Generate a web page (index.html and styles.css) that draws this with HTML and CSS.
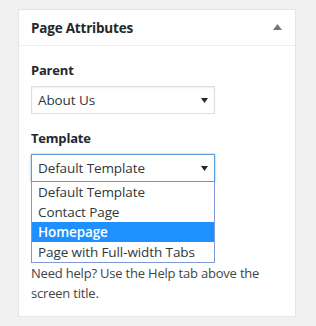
FILE: index.html
```html
<!DOCTYPE html>
<html>
<head>
<meta charset="utf-8">
<link rel="stylesheet" href="styles.css">
</head>
<body>
<div class="postbox">
  <div class="hndle">
    <h2 class="title">Page Attributes</h2>
    <svg class="toggle" width="9" height="6" viewBox="0 0 9 6"><polygon points="4.5,0 9,6 0,6" fill="#72777c"/></svg>
  </div>
  <div class="inside">
    <p class="label">Parent</p>
    <div class="select">
      <span>About Us</span>
      <svg class="caret" width="7" height="5" viewBox="0 0 7 5"><polygon points="0,0 7,0 3.5,5" fill="#23282d"/></svg>
    </div>
    <p class="label">Template</p>
    <div class="combo">
      <div class="select focused">
        <span>Default Template</span>
        <svg class="caret" width="7" height="5" viewBox="0 0 7 5"><polygon points="0,0 7,0 3.5,5" fill="#23282d"/></svg>
      </div>
      <ul class="dropdown">
        <li>Default Template</li>
        <li>Contact Page</li>
        <li class="active">Homepage</li>
        <li>Page with Full-width Tabs</li>
      </ul>
    </div>
    <div class="covered" aria-hidden="true">
      <p class="label">Order</p>
      <div class="select"><span>0</span></div>
    </div>
    <p class="help">Need help? Use the Help tab above the screen title.</p>
  </div>
</div>
</body>
</html>
```
FILE: styles.css
```css
html, body {
  margin: 0;
  padding: 0;
}
body {
  background: #f1f1f1;
  font-family: "Open Sans", "Noto Sans", sans-serif;
  color: #444;
  padding: 9px 20px 0 18px;
}
.postbox {
  background: #fff;
  border: 1px solid #e5e5e5;
  box-shadow: 0 1px 1px rgba(0,0,0,0.04);
  width: 276px;
}
.hndle {
  height: 35px;
  border-bottom: 1px solid #eee;
  display: flex;
  align-items: center;
  justify-content: space-between;
  padding: 0 13px 0 12px;
}
.title {
  margin: 0;
  font-size: 13.5px;
  font-weight: 700;
  color: #23282d;
  letter-spacing: -0.2px;
}
.toggle {
  display: block;
  margin-top: -1px;
}
.inside {
  padding: 14px 12px 13px 12px;
}
.label {
  margin: 0 0 6px 0;
  font-size: 13px;
  font-weight: 700;
  line-height: 20px;
  color: #23282d;
  letter-spacing: -0.2px;
}
.select {
  box-sizing: border-box;
  width: 184px;
  height: 28px;
  border: 1px solid #ddd;
  box-shadow: inset 0 1px 2px rgba(0,0,0,0.07);
  display: flex;
  align-items: center;
  justify-content: space-between;
  padding: 0 6px 0 6px;
  font-size: 13.5px;
  letter-spacing: -0.1px;
  color: #32373c;
  margin-bottom: 14px;
}
.caret {
  display: block;
}
.combo {
  position: relative;
  width: 184px;
  margin-bottom: 14px;
}
.combo .select {
  margin-bottom: 0;
}
.select.focused {
  border-color: #5b9dd9;
  box-shadow: 0 0 2px rgba(30,140,190,0.6);
}
.covered {
  visibility: hidden;
}
.covered .select {
  margin-bottom: 13px;
}
.dropdown {
  position: absolute;
  top: 100%;
  left: 0;
  box-sizing: border-box;
  width: 184px;
  margin: 0;
  padding: 0;
  list-style: none;
  background: #fff;
  border: 1px solid #7e9bd6;
  border-top: none;
  z-index: 2;
}
.dropdown li {
  height: 20px;
  line-height: 20px;
  padding-left: 6px;
  font-size: 13.5px;
  letter-spacing: -0.1px;
  color: #32373c;
  white-space: nowrap;
}
.dropdown li.active {
  background: #1e90ff;
  color: #fff;
  font-weight: 600;
}
.help {
  margin: 0;
  font-size: 13px;
  letter-spacing: -0.2px;
  line-height: 20px;
  color: #444;
}
```
